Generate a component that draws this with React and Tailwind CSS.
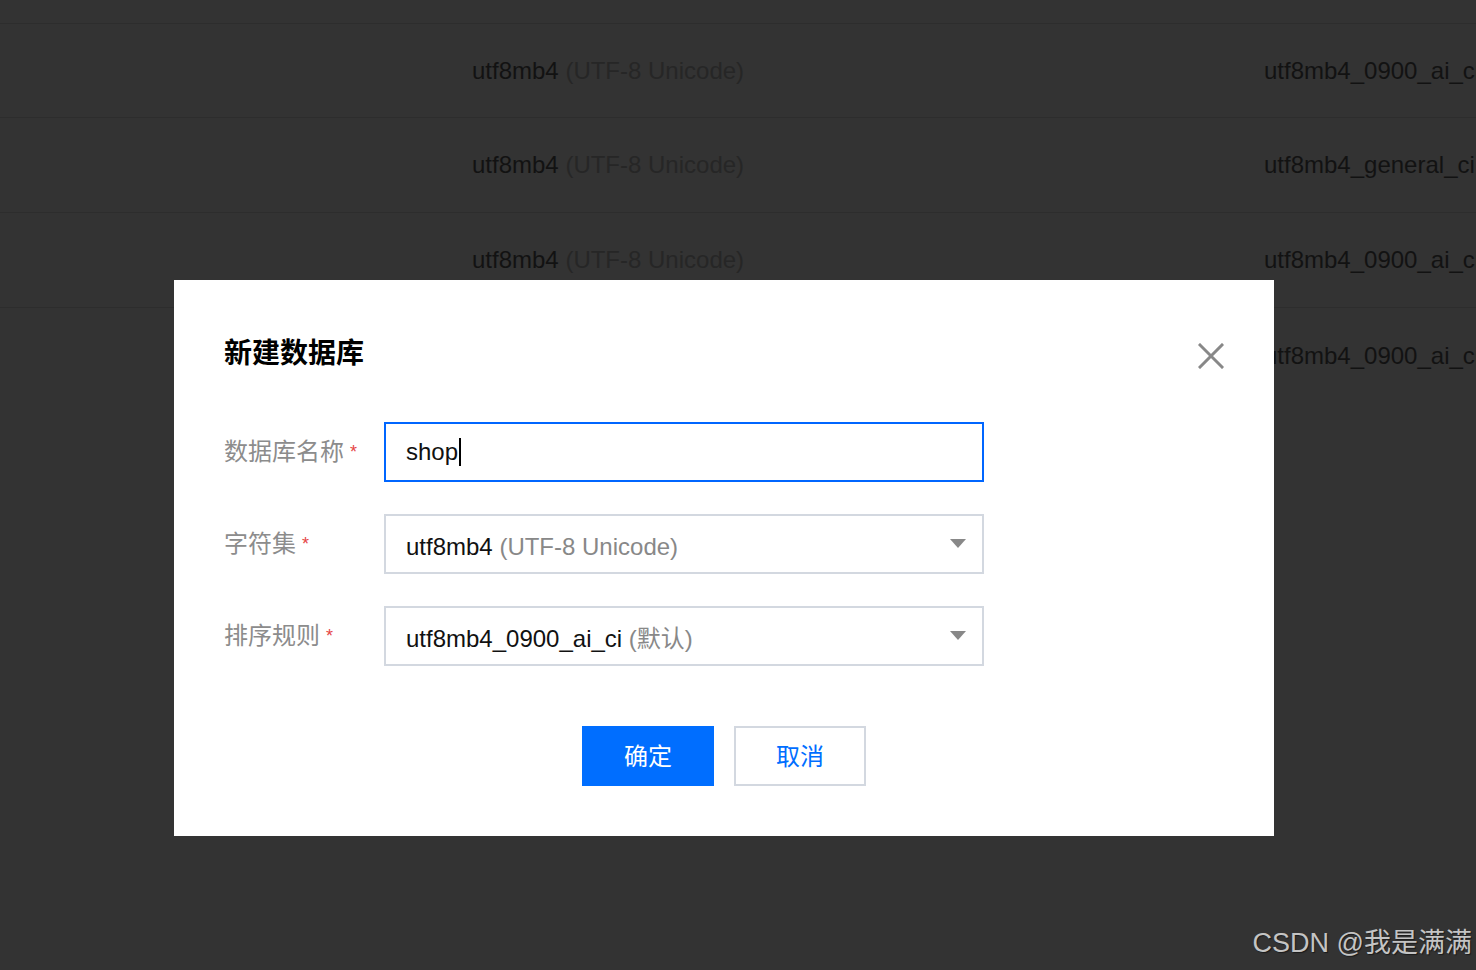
import React from "react";

const rows = [
  { coll: "utf8mb4_0900_ai_ci" },
  { coll: "utf8mb4_general_ci" },
  { coll: "utf8mb4_0900_ai_ci" },
  { coll: "utf8mb4_0900_ai_ci" },
];

const font = "font-['Liberation_Sans','Noto_Sans_CJK_SC',sans-serif]";

function Caret() {
  return (
    <svg width="16" height="10" viewBox="0 0 16 10" className="shrink-0">
      <path d="M0 0 L16 0 L8 9 Z" fill="#888888" />
    </svg>
  );
}

function Label({ text }) {
  return (
    <div className="w-[160px] shrink-0 flex items-center text-[24px] text-[#8c8c8c]">
      <span>{text}</span>
      <span className="ml-[6px] text-[#e54545] text-[18px] leading-none">*</span>
    </div>
  );
}

export default function App() {
  return (
    <div className={`relative w-[1476px] h-[970px] overflow-hidden bg-[#333333] ${font}`}>
      {/* Background table (under overlay) */}
      <div className="flex flex-col">
        <div className="h-[24px] border-b border-[#2d2d2d]" />
        {rows.map((r, i) => (
          <div
            key={i}
            className={`${i === 0 ? "h-[94px]" : "h-[95px]"} flex items-center text-[24px] ${i < 3 ? "border-b border-[#2d2d2d]" : ""}`}
          >
            <div className="w-[472px] shrink-0" />
            <div className="w-[792px] shrink-0 whitespace-nowrap">
              <span className="text-[#121212]">utf8mb4</span>
              <span className="text-[#262626]"> (UTF-8 Unicode)</span>
            </div>
            <div className="whitespace-nowrap text-[#121212]">{r.coll}</div>
          </div>
        ))}
      </div>

      {/* Modal */}
      <div className="absolute left-[174px] top-[280px] w-[1100px] h-[556px] bg-white px-[50px] pt-[54px] pb-[50px] flex flex-col">
        <div className="flex items-center justify-between h-[40px]">
          <div className="text-[28px] font-bold text-black leading-[40px]">新建数据库</div>
          <svg width="26" height="26" viewBox="0 0 26 26" className="mt-[4px]">
            <path d="M2 2 L24 24 M24 2 L2 24" stroke="#888888" strokeWidth="3" strokeLinecap="square" />
          </svg>
        </div>

        <div className="mt-[48px] flex flex-col gap-[32px]">
          <div className="flex items-center h-[60px]">
            <Label text="数据库名称" />
            <div className="w-[600px] h-[60px] border-2 border-[#0066ff] flex items-center pl-[20px] text-[24px] text-[#111111]">
              <span>shop</span>
              <span className="w-[2px] h-[28px] bg-black ml-[1px]" />
            </div>
          </div>
          <div className="flex items-center h-[60px]">
            <Label text="字符集" />
            <div className="w-[600px] h-[60px] border-2 border-[#d3d8e0] flex items-center justify-between pl-[20px] pr-[16px] text-[24px]">
              <div className="whitespace-nowrap pt-[6px]">
                <span className="text-[#111111]">utf8mb4</span>
                <span className="text-[#888888]"> (UTF-8 Unicode)</span>
              </div>
              <Caret />
            </div>
          </div>
          <div className="flex items-center h-[60px]">
            <Label text="排序规则" />
            <div className="w-[600px] h-[60px] border-2 border-[#d3d8e0] flex items-center justify-between pl-[20px] pr-[16px] text-[24px]">
              <div className="whitespace-nowrap pt-[6px]">
                <span className="text-[#111111]">utf8mb4_0900_ai_ci</span>
                <span className="text-[#888888]"> (默认)</span>
              </div>
              <Caret />
            </div>
          </div>
        </div>

        <div className="mt-[60px] flex justify-center gap-[20px]">
          <button className="w-[132px] h-[60px] bg-[#006eff] text-white text-[24px] flex items-center justify-center pt-[2px]">
            确定
          </button>
          <button className="w-[132px] h-[60px] bg-white border-2 border-[#d3d8e0] text-[#006eff] text-[24px] flex items-center justify-center pt-[2px]">
            取消
          </button>
        </div>
      </div>

      {/* Watermark */}
      <div className="absolute right-[4px] bottom-[7px] text-[27px] text-[#c4c4c4] whitespace-nowrap [text-shadow:1px_1px_1px_#1a1a1a]">
        CSDN @我是满满
      </div>
    </div>
  );
}
